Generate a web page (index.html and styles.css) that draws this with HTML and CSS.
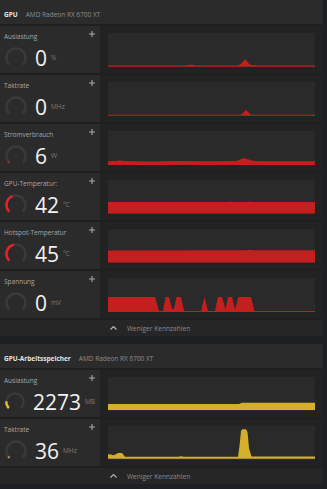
FILE: index.html
```html
<!DOCTYPE html>
<html lang="de">
<head>
<meta charset="UTF-8">
<meta name="viewport" content="width=device-width, initial-scale=1.0">
<title>GPU Leistung</title>
<link rel="stylesheet" href="styles.css">
</head>
<body>
<div class="page">

  <section class="group">
    <header class="group-head">
      <span class="group-title">GPU</span>
      <span class="group-device">AMD Radeon RX 6700 XT</span>
    </header>

    <div class="metric">
      <div class="metric-info">
        <div class="metric-top">
          <span class="metric-label">Auslastung</span>
          <svg class="metric-add" viewBox="0 0 6 6"><path d="M3 0V6M0 3H6"/></svg>
        </div>
        <div class="metric-body">
          <svg class="gauge" viewBox="0 0 24 24"><path class="gauge-track" d="M5.28 18.72A9.5 9.5 0 1 1 18.72 18.72"/></svg>
          <span class="metric-value">0<span class="metric-unit">%</span></span>
        </div>
      </div>
      <div class="metric-chart">
        <svg class="chart red" viewBox="0 0 207 34" preserveAspectRatio="none"><path d="M0 32.5L78 32.5L81 31.8L85 31.8L88 32.5L130 32.5L133 30.8L137.5 26L141 30.8L143 32L148 32.2L151 32.5L207 32.5V33.8H0Z"/></svg>
      </div>
    </div>

    <div class="metric">
      <div class="metric-info">
        <div class="metric-top">
          <span class="metric-label">Taktrate</span>
          <svg class="metric-add" viewBox="0 0 6 6"><path d="M3 0V6M0 3H6"/></svg>
        </div>
        <div class="metric-body">
          <svg class="gauge" viewBox="0 0 24 24"><path class="gauge-track" d="M5.28 18.72A9.5 9.5 0 1 1 18.72 18.72"/></svg>
          <span class="metric-value">0<span class="metric-unit">MHz</span></span>
        </div>
      </div>
      <div class="metric-chart">
        <svg class="chart red" viewBox="0 0 207 34" preserveAspectRatio="none"><path d="M0 32.8L133 32.8L135.5 30.5L138 28L140.5 30.5L143 32.8L207 32.8V33.8H0Z"/></svg>
      </div>
    </div>

    <div class="metric">
      <div class="metric-info">
        <div class="metric-top">
          <span class="metric-label">Stromverbrauch</span>
          <svg class="metric-add" viewBox="0 0 6 6"><path d="M3 0V6M0 3H6"/></svg>
        </div>
        <div class="metric-body">
          <svg class="gauge" viewBox="0 0 24 24"><path class="gauge-track" d="M5.28 18.72A9.5 9.5 0 1 1 18.72 18.72"/><path class="gauge-red" d="M5.28 18.72A9.5 9.5 0 0 1 4.41 17.72"/></svg>
          <span class="metric-value">6<span class="metric-unit">W</span></span>
        </div>
      </div>
      <div class="metric-chart">
        <svg class="chart red" viewBox="0 0 207 34" preserveAspectRatio="none"><path d="M0 30.3L9 30L12 29.2L16 30L40 30.4L70 30.1L100 30.3L128 30.1L132 28.6L136 27L140 28.2L145 29.8L152 30.2L207 30.3V34H0Z"/></svg>
      </div>
    </div>

    <div class="metric">
      <div class="metric-info">
        <div class="metric-top">
          <span class="metric-label">GPU-Temperatur:</span>
          <svg class="metric-add" viewBox="0 0 6 6"><path d="M3 0V6M0 3H6"/></svg>
        </div>
        <div class="metric-body">
          <svg class="gauge" viewBox="0 0 24 24"><path class="gauge-track" d="M5.28 18.72A9.5 9.5 0 1 1 18.72 18.72"/><path class="gauge-red" d="M5.28 18.72A9.5 9.5 0 0 1 8.5 3.17"/></svg>
          <span class="metric-value">42<span class="metric-unit">°C</span></span>
        </div>
      </div>
      <div class="metric-chart">
        <svg class="chart red" viewBox="0 0 207 34" preserveAspectRatio="none"><path d="M0 22L50 22L52 21.6L54 22L120 22L122 21.6L124 22L140 22L142 21.4L145 22L207 22V33.6H0Z"/></svg>
      </div>
    </div>

    <div class="metric">
      <div class="metric-info">
        <div class="metric-top">
          <span class="metric-label">Hotspot-Temperatur</span>
          <svg class="metric-add" viewBox="0 0 6 6"><path d="M3 0V6M0 3H6"/></svg>
        </div>
        <div class="metric-body">
          <svg class="gauge" viewBox="0 0 24 24"><path class="gauge-track" d="M5.28 18.72A9.5 9.5 0 1 1 18.72 18.72"/><path class="gauge-red" d="M5.28 18.72A9.5 9.5 0 0 1 9.78 2.76"/></svg>
          <span class="metric-value">45<span class="metric-unit">°C</span></span>
        </div>
      </div>
      <div class="metric-chart">
        <svg class="chart red" viewBox="0 0 207 34" preserveAspectRatio="none"><path d="M0 21.4L138 21.3L141 20.8L144 21.3L207 21.3V33.6H0Z"/></svg>
      </div>
    </div>

    <div class="metric">
      <div class="metric-info">
        <div class="metric-top">
          <span class="metric-label">Spannung</span>
          <svg class="metric-add" viewBox="0 0 6 6"><path d="M3 0V6M0 3H6"/></svg>
        </div>
        <div class="metric-body">
          <svg class="gauge" viewBox="0 0 24 24"><path class="gauge-track" d="M5.28 18.72A9.5 9.5 0 1 1 18.72 18.72"/></svg>
          <span class="metric-value">0<span class="metric-unit">mV</span></span>
        </div>
      </div>
      <div class="metric-chart">
        <svg class="chart red" viewBox="0 0 207 34" preserveAspectRatio="none"><path d="M0 19H47L51 33H55L57.5 19H61L64 31H66L68.5 19H73L76 33H93L96.5 19L100 33H107L110 19H114L117.5 31L120 19H124L127 31.5L130.5 19H143L146.5 33H207V34H0Z"/></svg>
      </div>
    </div>

    <div class="group-toggle">
      <svg class="toggle-icon" viewBox="0 0 7 4"><path d="M0.5 3.5L3.5 0.5L6.5 3.5"/></svg>
      <span>Weniger Kennzahlen</span>
    </div>
  </section>

  <section class="group">
    <header class="group-head">
      <span class="group-title">GPU-Arbeitsspeicher</span>
      <span class="group-device">AMD Radeon RX 6700 XT</span>
    </header>

    <div class="metric">
      <div class="metric-info">
        <div class="metric-top">
          <span class="metric-label">Auslastung</span>
          <svg class="metric-add" viewBox="0 0 6 6"><path d="M3 0V6M0 3H6"/></svg>
        </div>
        <div class="metric-body">
          <svg class="gauge" viewBox="0 0 24 24"><path class="gauge-track" d="M5.28 18.72A9.5 9.5 0 1 1 18.72 18.72"/><path class="gauge-yellow" d="M5.28 18.72A9.5 9.5 0 0 1 2.54 11.17"/></svg>
          <span class="metric-value">2273<span class="metric-unit">MB</span></span>
        </div>
      </div>
      <div class="metric-chart">
        <svg class="chart yellow" viewBox="0 0 207 34" preserveAspectRatio="none"><path d="M0 27H131L134 25.8H207V33H0Z"/></svg>
      </div>
    </div>

    <div class="metric">
      <div class="metric-info">
        <div class="metric-top">
          <span class="metric-label">Taktrate</span>
          <svg class="metric-add" viewBox="0 0 6 6"><path d="M3 0V6M0 3H6"/></svg>
        </div>
        <div class="metric-body">
          <svg class="gauge" viewBox="0 0 24 24"><path class="gauge-track" d="M5.28 18.72A9.5 9.5 0 1 1 18.72 18.72"/><path class="gauge-yellow" d="M5.28 18.72A9.5 9.5 0 0 1 4.41 17.72"/></svg>
          <span class="metric-value">36<span class="metric-unit">MHz</span></span>
        </div>
      </div>
      <div class="metric-chart">
        <svg class="chart yellow" viewBox="0 0 207 34" preserveAspectRatio="none"><path d="M0 28.3L3 28.5L5 29.2L7 28.8L10 27L14 27L17 30.7H70L73 30.3L76 30.7H130L131.5 20L133 5L134.5 3.3H138L139.5 6L141 22L143.5 30.5H207V32.7H0Z"/></svg>
      </div>
    </div>

    <div class="group-toggle">
      <svg class="toggle-icon" viewBox="0 0 7 4"><path d="M0.5 3.5L3.5 0.5L6.5 3.5"/></svg>
      <span>Weniger Kennzahlen</span>
    </div>
  </section>

</div>
</body>
</html>
```

FILE: styles.css
```css
body {
  margin: 0;
  padding: 0;
  background-color: #1e1f22;
  font-family: "Open Sans", "Noto Sans", sans-serif;
}

.page {
  width: 323px;
}

.group + .group {
  margin-top: 8px;
}

.group-head {
  display: flex;
  align-items: center;
  height: 24px;
  padding: 4px 4px 0;
  box-sizing: border-box;
  background-color: #2b2b2b;
  font-size: 6.5px;
}

.group-title {
  font-weight: 700;
  color: #e4e4e4;
}

.group-device {
  margin-left: 8px;
  color: #8e8e8e;
}

.metric {
  display: flex;
  height: 47px;
  margin-top: 2px;
}

.metric-info {
  width: 100px;
  padding: 0 5px 0 4px;
  box-sizing: border-box;
  background-color: #2b2b2b;
}

.metric-top {
  display: flex;
  justify-content: space-between;
  align-items: flex-start;
}

.metric-label {
  padding-top: 6px;
  font-size: 6.5px;
  line-height: 10px;
  color: #a6a6a6;
}

.metric-add {
  width: 6px;
  height: 6px;
  margin-top: 5px;
  stroke: #a8a8a8;
  stroke-width: 1.1;
}

.metric-body {
  display: flex;
  align-items: center;
  margin-top: 4px;
}

.gauge {
  width: 24px;
  height: 24px;
  fill: none;
  stroke-width: 2.5;
}

.gauge-track {
  stroke: #3a3a3a;
}

.gauge-red {
  stroke: #e32424;
}

.gauge-yellow {
  stroke: #e2bd2a;
}

.metric-value {
  margin-left: 7px;
  font-size: 21px;
  line-height: 24px;
  color: #f2f2f2;
}

.metric-unit {
  margin-left: 4px;
  font-size: 6.5px;
  line-height: 1;
  vertical-align: 6px;
  color: #7a7a7a;
}

.metric-chart {
  flex: 1;
  padding: 7px 8px 6px;
  background-color: #222222;
}

.chart {
  display: block;
  width: 100%;
  height: 34px;
  background-color: #2a2a2a;
}

.chart.red {
  fill: #c41f1f;
}

.chart.yellow {
  fill: #d4b02a;
}

.group-toggle {
  display: flex;
  align-items: center;
  height: 16px;
  margin-top: 2px;
  padding-left: 110px;
  border-radius: 0 0 2px 2px;
  background-color: #262626;
  font-size: 6.6px;
  color: #8a8a8a;
}

.toggle-icon {
  width: 7px;
  height: 4px;
  margin-right: 10px;
  fill: none;
  stroke: #b8b8b8;
  stroke-width: 1.1;
}
```
